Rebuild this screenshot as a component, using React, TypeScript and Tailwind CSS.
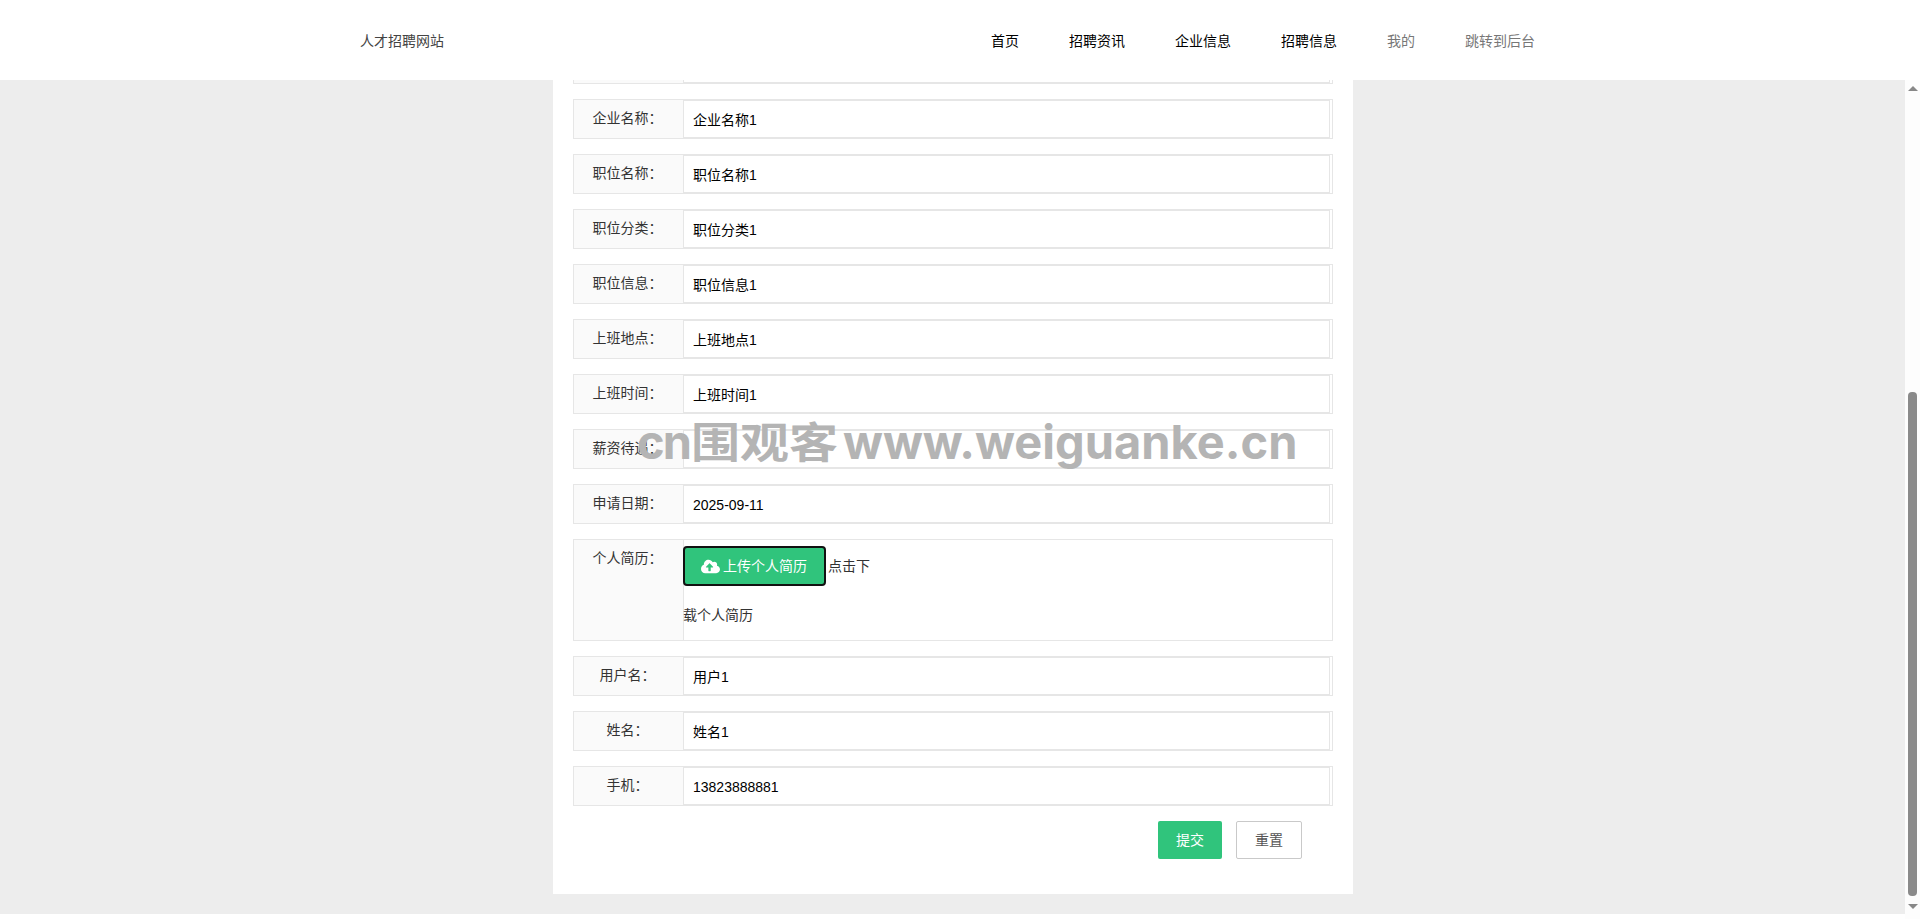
import { FaCloudUploadAlt } from "react-icons/fa";

const font = "font-['Liberation_Sans','Noto_Sans_CJK_SC',sans-serif]";

const navItems = [
  { label: "首页", muted: false },
  { label: "招聘资讯", muted: false },
  { label: "企业信息", muted: false },
  { label: "招聘信息", muted: false },
  { label: "我的", muted: true },
  { label: "跳转到后台", muted: true },
];

const topRows = [
  ["企业名称：", "企业名称1"],
  ["职位名称：", "职位名称1"],
  ["职位分类：", "职位分类1"],
  ["职位信息：", "职位信息1"],
  ["上班地点：", "上班地点1"],
  ["上班时间：", "上班时间1"],
  ["薪资待遇：", ""],
  ["申请日期：", "2025-09-11"],
];

const bottomRows = [
  ["用户名：", "用户1"],
  ["姓名：", "姓名1"],
  ["手机：", "13823888881"],
];

const Field = ({ label, value }: { label: string; value: string }) => {
  return (
    <div className="flex h-10 mb-[15px] border border-[#e6e6e6]">
      <div className="w-[110px] shrink-0 bg-[#fafafa] border-r border-[#e6e6e6] pt-[8px] pr-[2px] text-center text-sm leading-5 text-[#333]">
        {label}
      </div>
      <div className="flex-1 mr-[2px] border-y border-r border-[#e6e6e6] pl-[9px] text-sm leading-[38px] text-black">
        {value}
      </div>
    </div>
  );
};

const Scrollbar = () => {
  return (
    <div className="w-[15px] shrink-0 bg-[#fdfdfd] flex flex-col items-center">
      <div className="mt-[6px] w-0 h-0 border-x-[5px] border-x-transparent border-b-[5px] border-b-[#888]" />
      <div className="mt-[301px] w-[9px] h-[504px] bg-[#8a8a8a] rounded-[4px]" />
      <div className="mt-[8px] w-0 h-0 border-x-[5px] border-x-transparent border-t-[5px] border-t-[#888]" />
    </div>
  );
};

export default function App() {
  return (
    <div className={`relative h-[919px] w-full overflow-hidden bg-white flex flex-col ${font}`}>
      <header className="h-20 shrink-0 bg-white flex items-center justify-between pt-[2px] pl-[360px] pr-[385px] text-sm">
        <div className="text-[#444]">人才招聘网站</div>
        <nav className="flex gap-[50px]">
          {navItems.map((item) => (
            <a key={item.label} className={item.muted ? "text-[#777]" : "text-black"}>
              {item.label}
            </a>
          ))}
        </nav>
      </header>

      <div className="flex h-[839px]">
        <main className="flex-1 h-[834px] bg-[#ededed] overflow-hidden">
          <div className="ml-[553px] w-[800px] h-[814px] bg-white px-5 overflow-hidden">
            <div className="-mt-[36px] mb-[15px] h-10 border border-[#e6e6e6] flex">
              <div className="w-[110px] border-r border-[#e6e6e6] bg-[#fafafa]" />
              <div className="flex-1 mr-[2px] border-y border-r border-[#e6e6e6]" />
            </div>
            {topRows.map(([label, value]) => (
              <Field key={label} label={label} value={value} />
            ))}
            <div className="flex h-[102px] mb-[15px] border border-[#e6e6e6]">
              <div className="w-[110px] shrink-0 bg-[#fafafa] border-r border-[#e6e6e6] pt-[8px] pr-[2px] text-center text-sm leading-5 text-[#333]">
                个人简历：
              </div>
              <div className="flex-1 text-sm text-[#333]">
                <div className="flex items-center mt-[6px]">
                  <button className="-ml-px h-10 w-[143px] rounded-[4px] border-2 border-[#111] bg-[#30c47c] pr-[1px] text-white flex items-center justify-center gap-[3px]">
                    <FaCloudUploadAlt className="text-[19px]" />
                    上传个人简历
                  </button>
                  <span className="ml-[2px]">点击下</span>
                </div>
                <div className="mt-[19px] -ml-px leading-5">载个人简历</div>
              </div>
            </div>
            {bottomRows.map(([label, value]) => (
              <Field key={label} label={label} value={value} />
            ))}
            <div className="flex justify-end gap-[14px] pr-[31px]">
              <button className="h-[38px] w-16 rounded-[2px] bg-[#30c47c] text-sm text-white">提交</button>
              <button className="h-[38px] w-[66px] rounded-[2px] border border-[#c9c9c9] bg-white text-sm text-[#555]">重置</button>
            </div>
          </div>
        </main>
        <Scrollbar />
      </div>

      {/* watermark burned into the screenshot */}
      <div className="absolute left-[698px] top-[443px] w-px h-3 bg-[#6f93c9]" />
      <div className="absolute left-[637px] top-[403px] flex items-baseline whitespace-nowrap font-bold text-[#b4b4b4] pointer-events-none font-['Inter',sans-serif]">
        <span className="text-[47px] leading-[70px] tracking-[-2px]">cn</span>
        <span className="ml-[1px] inline-block origin-bottom scale-y-[0.85] translate-y-[-3px] text-[49px] leading-[70px] font-['Noto_Sans_CJK_SC',sans-serif]">围观客</span>
        <span className="ml-[5px] text-[47px] leading-[70px]">www.weiguanke.cn</span>
      </div>
    </div>
  );
}
